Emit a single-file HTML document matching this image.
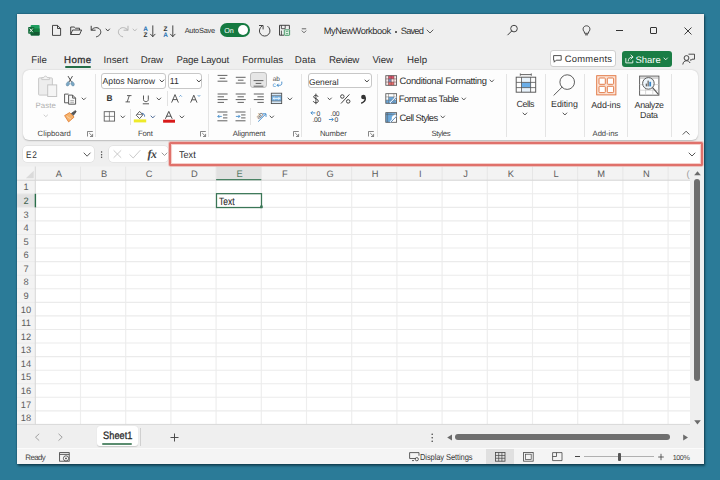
<!DOCTYPE html><html><head><meta charset="utf-8"><style>
*{box-sizing:border-box;margin:0;padding:0}
html,body{width:720px;height:480px;overflow:hidden;background:#2b7b98;font-family:"Liberation Sans",sans-serif;color:#242424;text-rendering:geometricPrecision}
.a{position:absolute}
#win{position:absolute;left:17px;top:13.7px;width:687px;height:450.3px;background:#efefef;box-shadow:0 0 1.5px rgba(0,25,35,.6),0.5px 1.5px 2px rgba(0,25,35,.5)}
.t{position:absolute;white-space:nowrap;line-height:1}
svg{position:absolute;overflow:visible}
</style></head><body>
<div id="win"></div>
<svg class="a" style="left:0;top:0" width="720" height="480" viewBox="0 0 720 480"><rect x="35.3" y="180.2" width="654.7" height="244.5" fill="#ffffff"/><rect x="17" y="166.5" width="673.0" height="13.699999999999989" fill="#f3f3f3"/><rect x="17" y="180.2" width="18.299999999999997" height="244.5" fill="#f3f3f3"/><rect x="216.10000000000002" y="166.5" width="45.2" height="13.699999999999989" fill="#e1e1e1"/><rect x="17" y="193.76999999999998" width="18.299999999999997" height="13.57" fill="#e1e1e1"/><line x1="80.5" y1="166.5" x2="80.5" y2="180.2" stroke="#e6e6e6" stroke-width="1"/><line x1="80.5" y1="180.2" x2="80.5" y2="424.7" stroke="#eeeeee" stroke-width="1.2"/><line x1="125.7" y1="166.5" x2="125.7" y2="180.2" stroke="#e6e6e6" stroke-width="1"/><line x1="125.7" y1="180.2" x2="125.7" y2="424.7" stroke="#eeeeee" stroke-width="1.2"/><line x1="170.90000000000003" y1="166.5" x2="170.90000000000003" y2="180.2" stroke="#e6e6e6" stroke-width="1"/><line x1="170.90000000000003" y1="180.2" x2="170.90000000000003" y2="424.7" stroke="#eeeeee" stroke-width="1.2"/><line x1="216.10000000000002" y1="166.5" x2="216.10000000000002" y2="180.2" stroke="#e6e6e6" stroke-width="1"/><line x1="216.10000000000002" y1="180.2" x2="216.10000000000002" y2="424.7" stroke="#eeeeee" stroke-width="1.2"/><line x1="261.3" y1="166.5" x2="261.3" y2="180.2" stroke="#e6e6e6" stroke-width="1"/><line x1="261.3" y1="180.2" x2="261.3" y2="424.7" stroke="#eeeeee" stroke-width="1.2"/><line x1="306.50000000000006" y1="166.5" x2="306.50000000000006" y2="180.2" stroke="#e6e6e6" stroke-width="1"/><line x1="306.50000000000006" y1="180.2" x2="306.50000000000006" y2="424.7" stroke="#eeeeee" stroke-width="1.2"/><line x1="351.70000000000005" y1="166.5" x2="351.70000000000005" y2="180.2" stroke="#e6e6e6" stroke-width="1"/><line x1="351.70000000000005" y1="180.2" x2="351.70000000000005" y2="424.7" stroke="#eeeeee" stroke-width="1.2"/><line x1="396.90000000000003" y1="166.5" x2="396.90000000000003" y2="180.2" stroke="#e6e6e6" stroke-width="1"/><line x1="396.90000000000003" y1="180.2" x2="396.90000000000003" y2="424.7" stroke="#eeeeee" stroke-width="1.2"/><line x1="442.1" y1="166.5" x2="442.1" y2="180.2" stroke="#e6e6e6" stroke-width="1"/><line x1="442.1" y1="180.2" x2="442.1" y2="424.7" stroke="#eeeeee" stroke-width="1.2"/><line x1="487.3" y1="166.5" x2="487.3" y2="180.2" stroke="#e6e6e6" stroke-width="1"/><line x1="487.3" y1="180.2" x2="487.3" y2="424.7" stroke="#eeeeee" stroke-width="1.2"/><line x1="532.5" y1="166.5" x2="532.5" y2="180.2" stroke="#e6e6e6" stroke-width="1"/><line x1="532.5" y1="180.2" x2="532.5" y2="424.7" stroke="#eeeeee" stroke-width="1.2"/><line x1="577.7" y1="166.5" x2="577.7" y2="180.2" stroke="#e6e6e6" stroke-width="1"/><line x1="577.7" y1="180.2" x2="577.7" y2="424.7" stroke="#eeeeee" stroke-width="1.2"/><line x1="622.9" y1="166.5" x2="622.9" y2="180.2" stroke="#e6e6e6" stroke-width="1"/><line x1="622.9" y1="180.2" x2="622.9" y2="424.7" stroke="#eeeeee" stroke-width="1.2"/><line x1="668.1" y1="166.5" x2="668.1" y2="180.2" stroke="#e6e6e6" stroke-width="1"/><line x1="668.1" y1="180.2" x2="668.1" y2="424.7" stroke="#eeeeee" stroke-width="1.2"/><line x1="35.3" y1="193.76999999999998" x2="690.0" y2="193.76999999999998" stroke="#ebebeb" stroke-width="1.1"/><line x1="17" y1="193.76999999999998" x2="35.3" y2="193.76999999999998" stroke="#ebebeb" stroke-width="1"/><line x1="35.3" y1="207.33999999999997" x2="690.0" y2="207.33999999999997" stroke="#ebebeb" stroke-width="1.1"/><line x1="17" y1="207.33999999999997" x2="35.3" y2="207.33999999999997" stroke="#ebebeb" stroke-width="1"/><line x1="35.3" y1="220.91" x2="690.0" y2="220.91" stroke="#ebebeb" stroke-width="1.1"/><line x1="17" y1="220.91" x2="35.3" y2="220.91" stroke="#ebebeb" stroke-width="1"/><line x1="35.3" y1="234.48" x2="690.0" y2="234.48" stroke="#ebebeb" stroke-width="1.1"/><line x1="17" y1="234.48" x2="35.3" y2="234.48" stroke="#ebebeb" stroke-width="1"/><line x1="35.3" y1="248.04999999999998" x2="690.0" y2="248.04999999999998" stroke="#ebebeb" stroke-width="1.1"/><line x1="17" y1="248.04999999999998" x2="35.3" y2="248.04999999999998" stroke="#ebebeb" stroke-width="1"/><line x1="35.3" y1="261.62" x2="690.0" y2="261.62" stroke="#ebebeb" stroke-width="1.1"/><line x1="17" y1="261.62" x2="35.3" y2="261.62" stroke="#ebebeb" stroke-width="1"/><line x1="35.3" y1="275.19" x2="690.0" y2="275.19" stroke="#ebebeb" stroke-width="1.1"/><line x1="17" y1="275.19" x2="35.3" y2="275.19" stroke="#ebebeb" stroke-width="1"/><line x1="35.3" y1="288.76" x2="690.0" y2="288.76" stroke="#ebebeb" stroke-width="1.1"/><line x1="17" y1="288.76" x2="35.3" y2="288.76" stroke="#ebebeb" stroke-width="1"/><line x1="35.3" y1="302.33" x2="690.0" y2="302.33" stroke="#ebebeb" stroke-width="1.1"/><line x1="17" y1="302.33" x2="35.3" y2="302.33" stroke="#ebebeb" stroke-width="1"/><line x1="35.3" y1="315.9" x2="690.0" y2="315.9" stroke="#ebebeb" stroke-width="1.1"/><line x1="17" y1="315.9" x2="35.3" y2="315.9" stroke="#ebebeb" stroke-width="1"/><line x1="35.3" y1="329.47" x2="690.0" y2="329.47" stroke="#ebebeb" stroke-width="1.1"/><line x1="17" y1="329.47" x2="35.3" y2="329.47" stroke="#ebebeb" stroke-width="1"/><line x1="35.3" y1="343.03999999999996" x2="690.0" y2="343.03999999999996" stroke="#ebebeb" stroke-width="1.1"/><line x1="17" y1="343.03999999999996" x2="35.3" y2="343.03999999999996" stroke="#ebebeb" stroke-width="1"/><line x1="35.3" y1="356.61" x2="690.0" y2="356.61" stroke="#ebebeb" stroke-width="1.1"/><line x1="17" y1="356.61" x2="35.3" y2="356.61" stroke="#ebebeb" stroke-width="1"/><line x1="35.3" y1="370.18" x2="690.0" y2="370.18" stroke="#ebebeb" stroke-width="1.1"/><line x1="17" y1="370.18" x2="35.3" y2="370.18" stroke="#ebebeb" stroke-width="1"/><line x1="35.3" y1="383.75" x2="690.0" y2="383.75" stroke="#ebebeb" stroke-width="1.1"/><line x1="17" y1="383.75" x2="35.3" y2="383.75" stroke="#ebebeb" stroke-width="1"/><line x1="35.3" y1="397.32" x2="690.0" y2="397.32" stroke="#ebebeb" stroke-width="1.1"/><line x1="17" y1="397.32" x2="35.3" y2="397.32" stroke="#ebebeb" stroke-width="1"/><line x1="35.3" y1="410.89" x2="690.0" y2="410.89" stroke="#ebebeb" stroke-width="1.1"/><line x1="17" y1="410.89" x2="35.3" y2="410.89" stroke="#ebebeb" stroke-width="1"/><line x1="35.3" y1="424.46" x2="690.0" y2="424.46" stroke="#ebebeb" stroke-width="1.1"/><line x1="17" y1="424.46" x2="35.3" y2="424.46" stroke="#ebebeb" stroke-width="1"/><line x1="17" y1="424.4" x2="690.0" y2="424.4" stroke="#d9d9d9" stroke-width="1"/><line x1="17" y1="180.2" x2="690.0" y2="180.2" stroke="#d4d4d4" stroke-width="1"/><line x1="35.3" y1="166.5" x2="35.3" y2="424.7" stroke="#d8d8d8" stroke-width="1"/><line x1="216.10000000000002" y1="179.6" x2="261.3" y2="179.6" stroke="#4a8264" stroke-width="1.4"/><line x1="35.4" y1="193.76999999999998" x2="35.4" y2="207.33999999999997" stroke="#2a6e4a" stroke-width="1.4"/><polygon points="33.7,170.7 33.7,178.2 25.8,178.2" fill="#dadada"/><rect x="216.50000000000003" y="193.67" width="45.0" height="13.870000000000001" fill="none" stroke="#3a7656" stroke-width="1.25"/><rect x="260.1" y="205.53999999999996" width="2.6" height="2.6" fill="#3a7656"/></svg>
<div class="t" style="left:43.8px;width:30px;text-align:center;top:169.5px;font-size:9.3px;color:#5e5e5e">A</div>
<div class="t" style="left:89.0px;width:30px;text-align:center;top:169.5px;font-size:9.3px;color:#5e5e5e">B</div>
<div class="t" style="left:134.2px;width:30px;text-align:center;top:169.5px;font-size:9.3px;color:#5e5e5e">C</div>
<div class="t" style="left:179.4px;width:30px;text-align:center;top:169.5px;font-size:9.3px;color:#5e5e5e">D</div>
<div class="t" style="left:224.6px;width:30px;text-align:center;top:169.5px;font-size:9.3px;color:#557a66">E</div>
<div class="t" style="left:269.8px;width:30px;text-align:center;top:169.5px;font-size:9.3px;color:#5e5e5e">F</div>
<div class="t" style="left:315.0px;width:30px;text-align:center;top:169.5px;font-size:9.3px;color:#5e5e5e">G</div>
<div class="t" style="left:360.2px;width:30px;text-align:center;top:169.5px;font-size:9.3px;color:#5e5e5e">H</div>
<div class="t" style="left:405.4px;width:30px;text-align:center;top:169.5px;font-size:9.3px;color:#5e5e5e">I</div>
<div class="t" style="left:450.6px;width:30px;text-align:center;top:169.5px;font-size:9.3px;color:#5e5e5e">J</div>
<div class="t" style="left:495.8px;width:30px;text-align:center;top:169.5px;font-size:9.3px;color:#5e5e5e">K</div>
<div class="t" style="left:541.0px;width:30px;text-align:center;top:169.5px;font-size:9.3px;color:#5e5e5e">L</div>
<div class="t" style="left:586.2px;width:30px;text-align:center;top:169.5px;font-size:9.3px;color:#5e5e5e">M</div>
<div class="t" style="left:631.4px;width:30px;text-align:center;top:169.5px;font-size:9.3px;color:#5e5e5e">N</div>
<div class="t" style="left:686.6px;top:169.5px;font-size:9.3px;color:#9a9a9a">(</div>
<div class="t" style="left:17px;width:18px;text-align:center;top:183.4px;font-size:9.3px;color:#5e5e5e">1</div>
<div class="t" style="left:17px;width:18px;text-align:center;top:197.0px;font-size:9.3px;color:#3f5f4e">2</div>
<div class="t" style="left:17px;width:18px;text-align:center;top:210.6px;font-size:9.3px;color:#5e5e5e">3</div>
<div class="t" style="left:17px;width:18px;text-align:center;top:224.1px;font-size:9.3px;color:#5e5e5e">4</div>
<div class="t" style="left:17px;width:18px;text-align:center;top:237.7px;font-size:9.3px;color:#5e5e5e">5</div>
<div class="t" style="left:17px;width:18px;text-align:center;top:251.3px;font-size:9.3px;color:#5e5e5e">6</div>
<div class="t" style="left:17px;width:18px;text-align:center;top:264.9px;font-size:9.3px;color:#5e5e5e">7</div>
<div class="t" style="left:17px;width:18px;text-align:center;top:278.4px;font-size:9.3px;color:#5e5e5e">8</div>
<div class="t" style="left:17px;width:18px;text-align:center;top:292.0px;font-size:9.3px;color:#5e5e5e">9</div>
<div class="t" style="left:17px;width:18px;text-align:center;top:305.6px;font-size:9.3px;color:#5e5e5e">10</div>
<div class="t" style="left:17px;width:18px;text-align:center;top:319.1px;font-size:9.3px;color:#5e5e5e">11</div>
<div class="t" style="left:17px;width:18px;text-align:center;top:332.7px;font-size:9.3px;color:#5e5e5e">12</div>
<div class="t" style="left:17px;width:18px;text-align:center;top:346.3px;font-size:9.3px;color:#5e5e5e">13</div>
<div class="t" style="left:17px;width:18px;text-align:center;top:359.8px;font-size:9.3px;color:#5e5e5e">14</div>
<div class="t" style="left:17px;width:18px;text-align:center;top:373.4px;font-size:9.3px;color:#5e5e5e">15</div>
<div class="t" style="left:17px;width:18px;text-align:center;top:387.0px;font-size:9.3px;color:#5e5e5e">16</div>
<div class="t" style="left:17px;width:18px;text-align:center;top:400.6px;font-size:9.3px;color:#5e5e5e">17</div>
<div class="t" style="left:17px;width:18px;text-align:center;top:414.1px;font-size:9.3px;color:#5e5e5e">18</div>
<svg style="left:0;top:0" width="720" height="480" viewBox="0 0 720 480"><rect x="30.6" y="25.0" width="9.0" height="10.6" rx="1.0" fill="#1f9d5f"/><rect x="30.6" y="28.5" width="9.0" height="3.6" fill="#13803f"/><path d="M30.6,32.1 H39.6 V34.6 C39.6,35.2 39.2,35.6 38.6,35.6 H31.6 C31.0,35.6 30.6,35.2 30.6,34.6 Z" fill="#135a33"/><rect x="28.2" y="26.9" width="6.0" height="6.8" rx="0.7" fill="#0f6b37"/><path d="M29.7,28.5 L32.8,32.2 M32.8,28.5 L29.7,32.2" stroke="#e8f5ee" stroke-width="1.0"/></svg>
<svg style="left:0;top:0" width="720" height="480" viewBox="0 0 720 480"><path d="M52.5,25.4 H57.5 L60.6,28.5 V35.4 H52.5 Z M57.5,25.4 V28.5 H60.6" fill="none" stroke="#333" stroke-width="0.9" stroke-linejoin="round"/></svg>
<svg style="left:69.50px;top:25.50px" width="12.50" height="9.50" viewBox="0 0 12.50 9.50"><path d="M0.7,8.5 V1 H4.2 L5.4,2.2 H9.5 V4 M0.7,8.5 L2.6,4 H11.6 L9.6,8.5 Z" fill="none" stroke="#333" stroke-width="0.9" stroke-linejoin="round"/></svg>
<svg style="left:90.00px;top:24.50px" width="12.00" height="12.50" viewBox="0 0 12.00 12.50"><path d="M1.2,1.2 V5.2 H5.2 M1.5,5 C3.5,2 8,1.8 10,4.5 C11.8,7.2 10.5,10.8 6.5,11.8" fill="none" stroke="#333" stroke-width="0.95" stroke-linecap="round" stroke-linejoin="round"/></svg>
<svg style="left:105.20px;top:28.30px" width="5.60" height="4.00" viewBox="0 0 5.60 4.00"><polyline points="1,1 2.8,3 4.6,1" fill="none" stroke="#333" stroke-width="0.9" stroke-linecap="round" stroke-linejoin="round"/></svg>
<svg style="left:117.00px;top:24.50px" width="12.50" height="12.50" viewBox="0 0 12.50 12.50"><path d="M11,1.2 V5.2 H7 M10.7,5 C8.7,2 4.2,1.8 2.2,4.5 C0.4,7.2 1.7,10.8 5.7,11.8" fill="none" stroke="#b0b0b0" stroke-width="0.95" stroke-linecap="round" stroke-linejoin="round"/></svg>
<svg style="left:132.40px;top:28.30px" width="5.60" height="4.00" viewBox="0 0 5.60 4.00"><polyline points="1,1 2.8,3 4.6,1" fill="none" stroke="#b8b8b8" stroke-width="0.9" stroke-linecap="round" stroke-linejoin="round"/></svg>
<svg style="left:143.00px;top:24.50px" width="13.00" height="12.50" viewBox="0 0 13.00 12.50"><text x="0.3" y="5.6" font-size="6.4" font-family="Liberation Sans" font-weight="bold" fill="#2e75b6">A</text><text x="0.5" y="11.8" font-size="6.4" font-family="Liberation Sans" font-weight="bold" fill="#333">Z</text><path d="M9.8,0.8 V11.5 M7.5,9.2 L9.8,11.6 L12.1,9.2" fill="none" stroke="#333" stroke-width="0.9" stroke-linecap="round"/></svg>
<svg style="left:163.00px;top:24.50px" width="13.00" height="12.50" viewBox="0 0 13.00 12.50"><text x="0.5" y="5.6" font-size="6.4" font-family="Liberation Sans" font-weight="bold" fill="#333">Z</text><text x="0.3" y="11.8" font-size="6.4" font-family="Liberation Sans" font-weight="bold" fill="#2e75b6">A</text><path d="M9.8,0.8 V11.5 M7.5,9.2 L9.8,11.6 L12.1,9.2" fill="none" stroke="#333" stroke-width="0.9" stroke-linecap="round"/></svg>
<div class="t" id="t0" style="left:184.66px;top:27.43px;font-size:7.4px;color:#333;font-weight:400;letter-spacing:-0.229px;">AutoSave</div>
<div class="a" style="left:219.7px;top:23.4px;width:30.40px;height:13.60px;background:#157a41;border-radius:7px"></div>
<div class="t" id="t1" style="left:224.18px;top:27.06px;font-size:7.2px;color:#fff;font-weight:400;letter-spacing:0.020px;">On</div>
<div class="a" style="left:237.8px;top:25.2px;width:10.10px;height:10.10px;background:#fff;border-radius:50%"></div>
<svg style="left:0;top:0" width="720" height="480" viewBox="0 0 720 480"><path d="M267.77,26.32 A5.35,5.35 0 1 1 261.71,26.26" fill="none" stroke="#3a3a3a" stroke-width="0.95" stroke-linecap="round"/><path d="M259.4,25.5 H263.1 V29.0" fill="none" stroke="#3a3a3a" stroke-width="0.95" stroke-linecap="round" stroke-linejoin="round"/></svg>
<svg style="left:0;top:0" width="720" height="480" viewBox="0 0 720 480"><path d="M284.0,35.2 H279.5 V25.3 H289.4 V29.4" fill="none" stroke="#3a3a3a" stroke-width="0.95" stroke-linejoin="round"/><path d="M281.4,25.3 V28.7 H285.2 V25.3" fill="none" stroke="#3a3a3a" stroke-width="0.85"/><path d="M281.4,30.6 V35.2" stroke="#3a3a3a" stroke-width="0.85"/><rect x="284.3" y="29.8" width="5.3" height="5.5" rx="0.5" fill="#e6f4ea" stroke="#2d8a52" stroke-width="0.85"/><path d="M285.6,32.2 C285.9,31.0 288.0,30.8 288.4,31.9 M288.5,32.9 C288.1,34.1 286.0,34.0 285.6,33.0" fill="none" stroke="#2d8a52" stroke-width="0.7"/></svg>
<svg style="left:301.00px;top:28.00px" width="6.00" height="6.00" viewBox="0 0 6.00 6.00"><path d="M0.8,0.8 H5.2" stroke="#444" stroke-width="0.8"/><path d="M0.8,2.6 L3,4.8 L5.2,2.6" fill="none" stroke="#444" stroke-width="0.8"/></svg>
<div class="t" id="t2" style="left:323.66px;top:27.45px;font-size:9.3px;color:#303030;font-weight:400;letter-spacing:-0.427px;">MyNewWorkbook</div>
<div class="a" style="left:394.8px;top:30.5px;width:2.20px;height:2.20px;background:#333;border-radius:50%"></div>
<div class="t" id="t3" style="left:400.74px;top:27.45px;font-size:9.3px;color:#303030;font-weight:400;letter-spacing:-0.800px;">Saved</div>
<svg style="left:426.00px;top:28.80px" width="8.00" height="5.00" viewBox="0 0 8.00 5.00"><polyline points="1,1 4.0,4.0 7.0,1" fill="none" stroke="#444" stroke-width="0.85" stroke-linecap="round" stroke-linejoin="round"/></svg>
<svg style="left:0;top:0" width="720" height="480" viewBox="0 0 720 480"><circle cx="514.0" cy="28.6" r="3.3" fill="none" stroke="#3a3a3a" stroke-width="0.95"/><path d="M511.7,31.0 L507.8,34.9" stroke="#3a3a3a" stroke-width="1.0" stroke-linecap="round"/></svg>
<svg style="left:581.50px;top:25.00px" width="9.00" height="11.00" viewBox="0 0 9.00 11.00"><path d="M2.3,6.8 C0.2,5 0.8,0.9 4.5,0.8 C8.2,0.9 8.8,5 6.7,6.8 L6.4,8.3 H2.6 Z M3,9.8 H6" fill="none" stroke="#333" stroke-width="0.9" stroke-linejoin="round"/></svg>
<div class="a" style="left:616.3px;top:29.8px;width:6.70px;height:0.90px;background:#333"></div>
<div class="a" style="left:650px;top:26.9px;width:7.00px;height:7.10px;border:0.9px solid #333;border-radius:1px"></div>
<svg style="left:683.50px;top:26.50px" width="8.00" height="8.00" viewBox="0 0 8.00 8.00"><path d="M0.8,0.8 L7.2,7.2 M7.2,0.8 L0.8,7.2" stroke="#333" stroke-width="0.95" stroke-linecap="round"/></svg>
<div class="t" id="t4" style="left:31.28px;top:56.03px;font-size:9.7px;color:#303030;font-weight:400;letter-spacing:0.000px;">File</div>
<div class="t" id="t5" style="left:63.96px;top:56.03px;font-size:9.7px;color:#303030;font-weight:400;letter-spacing:0.427px;-webkit-text-stroke:0.3px #303030;">Home</div>
<div class="t" id="t6" style="left:103.40px;top:56.03px;font-size:9.7px;color:#303030;font-weight:400;letter-spacing:0.096px;">Insert</div>
<div class="t" id="t7" style="left:140.84px;top:56.03px;font-size:9.7px;color:#303030;font-weight:400;letter-spacing:-0.160px;">Draw</div>
<div class="t" id="t8" style="left:176.40px;top:56.03px;font-size:9.7px;color:#303030;font-weight:400;letter-spacing:-0.160px;">Page Layout</div>
<div class="t" id="t9" style="left:242.34px;top:56.03px;font-size:9.7px;color:#303030;font-weight:400;letter-spacing:0.069px;">Formulas</div>
<div class="t" id="t10" style="left:294.84px;top:56.03px;font-size:9.7px;color:#303030;font-weight:400;letter-spacing:0.107px;">Data</div>
<div class="t" id="t11" style="left:329.00px;top:56.03px;font-size:9.7px;color:#303030;font-weight:400;letter-spacing:-0.288px;">Review</div>
<div class="t" id="t12" style="left:372.40px;top:56.03px;font-size:9.7px;color:#303030;font-weight:400;letter-spacing:-0.053px;">View</div>
<div class="t" id="t13" style="left:407.02px;top:56.03px;font-size:9.7px;color:#303030;font-weight:400;letter-spacing:0.053px;">Help</div>
<div class="a" style="left:64.6px;top:66.4px;width:26.30px;height:1.60px;background:#256e48;border-radius:1px"></div>
<div class="a" style="left:550.2px;top:50.3px;width:65.40px;height:16.80px;background:#fff;border:1px solid #cfcfcf;border-radius:3px"></div>
<svg style="left:553.30px;top:54.50px" width="9.20" height="8.00" viewBox="0 0 9.20 8.00"><path d="M0.6,0.6 H8.2 V5.2 H3.2 L1.2,7.2 V5.2 H0.6 Z" fill="none" stroke="#333" stroke-width="0.85" stroke-linejoin="round"/></svg>
<div class="t" id="t14" style="left:564.70px;top:54.07px;font-size:9.4px;color:#303030;font-weight:400;letter-spacing:0.286px;">Comments</div>
<div class="a" style="left:621.9px;top:50.5px;width:50.00px;height:16.00px;background:#1a7d45;border-radius:3px"></div>
<svg style="left:624.50px;top:53.50px" width="9.50" height="10.00" viewBox="0 0 9.50 10.00"><path d="M0.8,4.5 V8.9 H7.8 V6.8 M3.2,7 C3.4,4.2 5,3 7.5,3 M5.9,1 L8.1,3 L5.9,5" fill="none" stroke="#fff" stroke-width="0.85" stroke-linecap="round" stroke-linejoin="round"/></svg>
<div class="t" id="t15" style="left:635.60px;top:54.67px;font-size:9.4px;color:#fff;font-weight:400;letter-spacing:0.000px;">Share</div>
<svg style="left:662.80px;top:57.00px" width="5.40" height="3.80" viewBox="0 0 5.40 3.80"><polyline points="1,1 2.7,2.8 4.4,1" fill="none" stroke="#fff" stroke-width="0.85" stroke-linecap="round" stroke-linejoin="round"/></svg>
<svg style="left:681.50px;top:53.00px" width="13.50" height="12.00" viewBox="0 0 13.50 12.00"><circle cx="4.5" cy="5" r="2.4" fill="none" stroke="#333" stroke-width="0.9"/><path d="M0.8,11.5 C1.2,8.8 2.5,7.8 4.5,7.8 C6.5,7.8 7.5,8.5 8,10" fill="none" stroke="#333" stroke-width="0.9"/><path d="M6.5,1.2 H12.5 V6.2 H10 L8.8,7.5 V6.2" fill="none" stroke="#333" stroke-width="0.85" stroke-linejoin="round"/></svg>
<div class="a" style="left:22.8px;top:70px;width:674.90px;height:70.00px;background:#fdfdfd;border-radius:6px;box-shadow:0 0.5px 1.5px rgba(0,0,0,.22)"></div>
<div class="a" style="left:95.1px;top:73.5px;width:0.80px;height:63.50px;background:#e4e4e4"></div>
<div class="a" style="left:207.8px;top:73.5px;width:0.80px;height:63.50px;background:#e4e4e4"></div>
<div class="a" style="left:301.0px;top:73.5px;width:0.80px;height:63.50px;background:#e4e4e4"></div>
<div class="a" style="left:377.1px;top:73.5px;width:0.80px;height:63.50px;background:#e4e4e4"></div>
<div class="a" style="left:505.9px;top:73.5px;width:0.80px;height:63.50px;background:#e4e4e4"></div>
<div class="a" style="left:545.2px;top:73.5px;width:0.80px;height:63.50px;background:#e4e4e4"></div>
<div class="a" style="left:584.0px;top:73.5px;width:0.80px;height:63.50px;background:#e4e4e4"></div>
<div class="a" style="left:627.2px;top:73.5px;width:0.80px;height:63.50px;background:#e4e4e4"></div>
<div class="a" style="left:671.3px;top:73.5px;width:0.80px;height:63.50px;background:#e4e4e4"></div>
<div class="t" id="t16" style="left:37.60px;top:129.86px;font-size:7.7px;color:#444;font-weight:400;letter-spacing:0.040px;">Clipboard</div>
<div class="t" id="t17" style="left:137.98px;top:129.86px;font-size:7.7px;color:#444;font-weight:400;letter-spacing:-0.160px;">Font</div>
<div class="t" id="t18" style="left:232.72px;top:129.86px;font-size:7.7px;color:#444;font-weight:400;letter-spacing:-0.180px;">Alignment</div>
<div class="t" id="t19" style="left:319.92px;top:129.86px;font-size:7.7px;color:#444;font-weight:400;letter-spacing:-0.096px;">Number</div>
<div class="t" id="t20" style="left:431.48px;top:129.86px;font-size:7.7px;color:#444;font-weight:400;letter-spacing:-0.384px;">Styles</div>
<div class="t" id="t21" style="left:592.60px;top:129.86px;font-size:7.7px;color:#444;font-weight:400;letter-spacing:-0.080px;">Add-ins</div>
<svg style="left:86.90px;top:130.60px" width="6.50" height="6.00" viewBox="0 0 6.50 6.00"><path d="M0.5,5.5 V0.5 H5.8" fill="none" stroke="#555" stroke-width="0.7"/><path d="M2.2,2 L5.6,5.4 M3,5.5 H5.6 V2.9" fill="none" stroke="#555" stroke-width="0.7"/></svg>
<svg style="left:199.70px;top:130.60px" width="6.50" height="6.00" viewBox="0 0 6.50 6.00"><path d="M0.5,5.5 V0.5 H5.8" fill="none" stroke="#555" stroke-width="0.7"/><path d="M2.2,2 L5.6,5.4 M3,5.5 H5.6 V2.9" fill="none" stroke="#555" stroke-width="0.7"/></svg>
<svg style="left:293.30px;top:130.60px" width="6.50" height="6.00" viewBox="0 0 6.50 6.00"><path d="M0.5,5.5 V0.5 H5.8" fill="none" stroke="#555" stroke-width="0.7"/><path d="M2.2,2 L5.6,5.4 M3,5.5 H5.6 V2.9" fill="none" stroke="#555" stroke-width="0.7"/></svg>
<svg style="left:368.40px;top:130.60px" width="6.50" height="6.00" viewBox="0 0 6.50 6.00"><path d="M0.5,5.5 V0.5 H5.8" fill="none" stroke="#555" stroke-width="0.7"/><path d="M2.2,2 L5.6,5.4 M3,5.5 H5.6 V2.9" fill="none" stroke="#555" stroke-width="0.7"/></svg>
<svg style="left:0;top:0" width="720" height="480" viewBox="0 0 720 480"><rect x="38.6" y="77.9" width="13.8" height="17.2" rx="0.8" fill="#ededed" stroke="#c6c6c6" stroke-width="0.95"/><path d="M41.8,79.6 V77.6 H43.8 C44.2,75.6 46.8,75.6 47.2,77.6 H49.4 V79.6 Z" fill="#f4f4f4" stroke="#c6c6c6" stroke-width="0.9" stroke-linejoin="round"/><rect x="47.7" y="84.9" width="9.0" height="11.6" fill="#f5f5f5" stroke="#c2c2c2" stroke-width="0.95"/><path d="M68.2,76.4 L71.6,82.2 M72.3,76.4 L68.9,82.2" stroke="#4a4a4a" stroke-width="0.95" stroke-linecap="round"/><path d="M68.4,81.4 C66.4,82.4 65.6,84.6 66.6,85.7 C67.8,86.6 69.6,85.2 69.7,83.2 Z" fill="#7ba7c4" stroke="#5d86a3" stroke-width="0.5"/><path d="M72.1,81.4 C74.1,82.4 74.9,84.6 73.9,85.7 C72.7,86.6 70.9,85.2 70.8,83.2 Z" fill="#7ba7c4" stroke="#5d86a3" stroke-width="0.5"/><path d="M68.2,102.8 H64.6 V94.1 H68.6" fill="none" stroke="#4a4a4a" stroke-width="0.9" stroke-linejoin="round"/><path d="M68.6,95.1 H72.6 L75.6,98.1 V104.2 H68.6 Z M72.6,95.1 V98.1 H75.6" fill="#f7f7f7" stroke="#4a4a4a" stroke-width="0.9" stroke-linejoin="round"/><path d="M70.3,100.6 H73.9 M70.3,102.3 H73.9" stroke="#777" stroke-width="0.6"/><path d="M71.2,113.6 L74.9,110.9 C75.7,110.4 76.5,111.4 75.9,112.0 L73.2,115.6" fill="#555" stroke="#4a4a4a" stroke-width="0.8" stroke-linejoin="round"/><path d="M69.6,112.6 L74.1,117.1 L68.6,121.9 L64.6,115.6 Z" fill="#f6b26b" stroke="#de7a2e" stroke-width="0.8" stroke-linejoin="round"/><path d="M66.8,116.3 L71.0,119.0" stroke="#fbd7ad" stroke-width="0.8"/></svg>
<div class="t" id="t22" style="left:35.56px;top:101.88px;font-size:7.8px;color:#b0b0b0;font-weight:400;letter-spacing:0.080px;">Paste</div>
<svg style="left:42.60px;top:113.75px" width="5.60" height="3.70" viewBox="0 0 5.60 3.70"><polyline points="1,1 2.8,2.7 4.6,1" fill="none" stroke="#c0c0c0" stroke-width="0.8" stroke-linecap="round" stroke-linejoin="round"/></svg>
<svg style="left:80.60px;top:96.90px" width="5.60" height="3.80" viewBox="0 0 5.60 3.80"><polyline points="1,1 2.8,2.8 4.6,1" fill="none" stroke="#444" stroke-width="0.9" stroke-linecap="round" stroke-linejoin="round"/></svg>
<div class="a" style="left:101.3px;top:72.7px;width:65.00px;height:16.10px;background:#fff;border:1px solid #c8c8c8;border-radius:3px"></div>
<div class="t" id="t23" style="left:102.60px;top:77.36px;font-size:8.7px;color:#303030;font-weight:400;letter-spacing:-0.029px;">Aptos Narrow</div>
<svg style="left:159.20px;top:78.90px" width="5.80" height="4.00" viewBox="0 0 5.80 4.00"><polyline points="1,1 2.9,3 4.8,1" fill="none" stroke="#333" stroke-width="0.9" stroke-linecap="round" stroke-linejoin="round"/></svg>
<div class="a" style="left:168.3px;top:72.7px;width:34.20px;height:16.10px;background:#fff;border:1px solid #c8c8c8;border-radius:3px"></div>
<div class="t" id="t24" style="left:169.80px;top:76.96px;font-size:8.7px;color:#303030;font-weight:400;letter-spacing:0.000px;">11</div>
<svg style="left:195.90px;top:78.90px" width="5.80" height="4.00" viewBox="0 0 5.80 4.00"><polyline points="1,1 2.9,3 4.8,1" fill="none" stroke="#333" stroke-width="0.9" stroke-linecap="round" stroke-linejoin="round"/></svg>
<div class="t" id="t25" style="left:106.50px;top:94.10px;font-size:8.4px;color:#333;font-weight:700;letter-spacing:0.000px;">B</div>
<svg style="left:124.50px;top:94.50px" width="7.00" height="7.50" viewBox="0 0 7.00 7.50"><path d="M2,0.6 H6.5 M0.5,6.9 H5 M4.3,0.6 L2.2,6.9" fill="none" stroke="#444" stroke-width="0.85"/></svg>
<svg style="left:141.50px;top:94.50px" width="8.00" height="9.50" viewBox="0 0 8.00 9.50"><path d="M1.5,0.5 V4.6 C1.5,7.3 6.3,7.3 6.3,4.6 V0.5" fill="none" stroke="#444" stroke-width="0.9"/><path d="M0.8,8.8 H7" stroke="#444" stroke-width="0.9"/></svg>
<svg style="left:156.00px;top:96.90px" width="5.80" height="4.00" viewBox="0 0 5.80 4.00"><polyline points="1,1 2.9,3 4.8,1" fill="none" stroke="#444" stroke-width="0.9" stroke-linecap="round" stroke-linejoin="round"/></svg>
<div class="a" style="left:166.5px;top:91.3px;width:0.80px;height:15.00px;background:#e2e2e2"></div>
<svg style="left:170.50px;top:93.50px" width="11.50" height="9.50" viewBox="0 0 11.50 9.50"><path d="M0.6,8.6 L4,0.6 L7.4,8.6 M1.8,5.6 H6.2" fill="none" stroke="#444" stroke-width="0.9"/><path d="M8.4,2.6 L9.6,1.4 L10.8,2.6" fill="none" stroke="#3a86c8" stroke-width="0.8"/></svg>
<svg style="left:189.50px;top:93.50px" width="11.50" height="9.50" viewBox="0 0 11.50 9.50"><path d="M0.6,8.6 L3.8,1.2 L7,8.6 M1.8,5.8 H5.8" fill="none" stroke="#444" stroke-width="0.9"/><path d="M7.8,1.2 L9,2.4 L10.2,1.2" fill="none" stroke="#3a86c8" stroke-width="0.8"/></svg>
<svg style="left:0;top:0" width="720" height="480" viewBox="0 0 720 480"><rect x="104.2" y="111.7" width="10.4" height="9.4" fill="none" stroke="#555" stroke-width="0.85"/><path d="M109.4,111.7 V121.1 M104.2,116.4 H114.6" stroke="#6a6a6a" stroke-width="0.75"/></svg>
<svg style="left:120.10px;top:114.65px" width="5.60" height="3.90" viewBox="0 0 5.60 3.90"><polyline points="1,1 2.8,2.9 4.6,1" fill="none" stroke="#444" stroke-width="0.9" stroke-linecap="round" stroke-linejoin="round"/></svg>
<div class="a" style="left:130.0px;top:108.6px;width:0.70px;height:16.10px;background:#e2e2e2"></div>
<svg style="left:0;top:0" width="720" height="480" viewBox="0 0 720 480"><path d="M139.6,111.4 L142.9,114.8 L139.6,118.6 L136.2,115.2 Z" fill="#fff" stroke="#444" stroke-width="0.85" stroke-linejoin="round"/><path d="M137.0,114.4 L142.2,114.6" stroke="#444" stroke-width="0.6"/><path d="M141.8,113.2 C143.6,113.4 144.8,114.6 144.6,116.6" fill="none" stroke="#3a6fb0" stroke-width="0.95"/><rect x="133.8" y="119.4" width="12.4" height="3.0" fill="#eeea2a"/><path d="M165.4,118.8 L168.8,111.4 L172.2,118.8 M166.6,116.2 H171.0" fill="none" stroke="#444" stroke-width="0.95"/><rect x="163.1" y="119.7" width="11.9" height="3.0" fill="#d81a1a"/></svg>
<svg style="left:150.20px;top:114.65px" width="5.60" height="3.90" viewBox="0 0 5.60 3.90"><polyline points="1,1 2.8,2.9 4.6,1" fill="none" stroke="#3a5a8a" stroke-width="0.9" stroke-linecap="round" stroke-linejoin="round"/></svg>
<svg style="left:179.10px;top:114.60px" width="5.80" height="4.00" viewBox="0 0 5.80 4.00"><polyline points="1,1 2.9,3 4.8,1" fill="none" stroke="#444" stroke-width="0.9" stroke-linecap="round" stroke-linejoin="round"/></svg>
<svg style="left:0;top:0" width="720" height="480" viewBox="0 0 720 480"><path d="M217.6,75.4 H227.4" stroke="#5a5a5a" stroke-width="0.95"/><path d="M219.7,78.3 H225.3" stroke="#5a5a5a" stroke-width="0.95"/><path d="M217.6,81.2 H227.4" stroke="#5a5a5a" stroke-width="0.95"/><path d="M235.8,77.3 H245.6" stroke="#5a5a5a" stroke-width="0.95"/><path d="M237.9,80.2 H243.5" stroke="#5a5a5a" stroke-width="0.95"/><path d="M235.8,83.1 H245.6" stroke="#5a5a5a" stroke-width="0.95"/></svg>
<div class="a" style="left:250.3px;top:72.3px;width:16.40px;height:16.20px;background:#e6e6e6;border:1px solid #bdbdbd;border-radius:3px"></div>
<svg style="left:0;top:0" width="720" height="480" viewBox="0 0 720 480"><path d="M253.6,80.6 H263.4" stroke="#5a5a5a" stroke-width="0.95"/><path d="M255.7,83.4 H261.3" stroke="#5a5a5a" stroke-width="0.95"/><path d="M253.6,86.2 H263.4" stroke="#5a5a5a" stroke-width="0.95"/><path d="M217.6,94.0 H227.6" stroke="#5a5a5a" stroke-width="0.95"/><path d="M217.6,96.8 H224.0" stroke="#5a5a5a" stroke-width="0.95"/><path d="M217.6,99.6 H227.6" stroke="#5a5a5a" stroke-width="0.95"/><path d="M217.6,102.4 H224.0" stroke="#5a5a5a" stroke-width="0.95"/><path d="M235.7,94.0 H245.7" stroke="#5a5a5a" stroke-width="0.95"/><path d="M237.5,96.8 H243.9" stroke="#5a5a5a" stroke-width="0.95"/><path d="M235.7,99.6 H245.7" stroke="#5a5a5a" stroke-width="0.95"/><path d="M237.5,102.4 H243.9" stroke="#5a5a5a" stroke-width="0.95"/><path d="M253.8,94.0 H263.8" stroke="#5a5a5a" stroke-width="0.95"/><path d="M257.40000000000003,96.8 H263.8" stroke="#5a5a5a" stroke-width="0.95"/><path d="M253.8,99.6 H263.8" stroke="#5a5a5a" stroke-width="0.95"/><path d="M257.40000000000003,102.4 H263.8" stroke="#5a5a5a" stroke-width="0.95"/><path d="M217.4,112.0 H227.4" stroke="#5a5a5a" stroke-width="0.95"/><path d="M223.0,114.95 H227.4" stroke="#5a5a5a" stroke-width="0.95"/><path d="M223.0,117.9 H227.4" stroke="#5a5a5a" stroke-width="0.95"/><path d="M217.4,120.8 H227.4" stroke="#5a5a5a" stroke-width="0.95"/><path d="M221.8,116.4 H217.8 M219.3,114.9 L217.8,116.4 L219.3,117.9" fill="none" stroke="#3a86c8" stroke-width="0.85"/><path d="M235.5,112.0 H245.5" stroke="#5a5a5a" stroke-width="0.95"/><path d="M241.1,114.95 H245.5" stroke="#5a5a5a" stroke-width="0.95"/><path d="M241.1,117.9 H245.5" stroke="#5a5a5a" stroke-width="0.95"/><path d="M235.5,120.8 H245.5" stroke="#5a5a5a" stroke-width="0.95"/><path d="M235.9,116.4 H239.9 M238.4,114.9 L239.9,116.4 L238.4,117.9" fill="none" stroke="#3a86c8" stroke-width="0.85"/><text x="272.8" y="81.0" font-size="6.6" font-family="Liberation Sans" fill="#555" letter-spacing="-0.2">ab</text><text x="272.6" y="86.6" font-size="6.6" font-family="Liberation Sans" fill="#3a86c8">c</text><path d="M281.8,81.6 V83.4 C281.8,84.8 280.9,85.3 279.6,85.3 H277.0 M278.5,83.8 L277.0,85.3 L278.5,86.8" fill="none" stroke="#3a86c8" stroke-width="0.9"/><rect x="271.3" y="93.2" width="10.4" height="10.4" fill="#d5e8f8" stroke="#4a4a4a" stroke-width="0.85"/><rect x="271.3" y="95.8" width="10.4" height="5.2" fill="#7db6e6" stroke="#4a4a4a" stroke-width="0.6"/><path d="M273.2,98.4 H279.8 M274.5,97.1 L273.2,98.4 L274.5,99.7 M278.5,97.1 L279.8,98.4 L278.5,99.7" fill="none" stroke="#fff" stroke-width="0.8"/><text x="255.6" y="118.6" font-size="6.6" font-family="Liberation Sans" fill="#555" transform="rotate(-45 258.5 115.5)">ab</text><path d="M258.2,121.6 L265.8,114.0 M262.9,113.8 H266.0 V116.9" fill="none" stroke="#3a86c8" stroke-width="0.9"/></svg>
<svg style="left:286.90px;top:96.90px" width="5.80" height="4.00" viewBox="0 0 5.80 4.00"><polyline points="1,1 2.9,3 4.8,1" fill="none" stroke="#444" stroke-width="0.9" stroke-linecap="round" stroke-linejoin="round"/></svg>
<div class="a" style="left:250.2px;top:108px;width:0.70px;height:16.60px;background:#e2e2e2"></div>
<svg style="left:269.40px;top:114.95px" width="5.60" height="3.90" viewBox="0 0 5.60 3.90"><polyline points="1,1 2.8,2.9 4.6,1" fill="none" stroke="#444" stroke-width="0.9" stroke-linecap="round" stroke-linejoin="round"/></svg>
<div class="a" style="left:308.3px;top:72.7px;width:63.30px;height:15.60px;background:#fff;border:1px solid #c8c8c8;border-radius:3px"></div>
<div class="t" id="t26" style="left:309.02px;top:77.62px;font-size:8.4px;color:#303030;font-weight:400;letter-spacing:-0.053px;">General</div>
<svg style="left:364.30px;top:78.90px" width="5.80" height="4.00" viewBox="0 0 5.80 4.00"><polyline points="1,1 2.9,3 4.8,1" fill="none" stroke="#333" stroke-width="0.9" stroke-linecap="round" stroke-linejoin="round"/></svg>
<svg style="left:326.80px;top:97.00px" width="5.40" height="3.80" viewBox="0 0 5.40 3.80"><polyline points="1,1 2.7,2.8 4.4,1" fill="none" stroke="#444" stroke-width="0.9" stroke-linecap="round" stroke-linejoin="round"/></svg>
<svg style="left:0;top:0" width="720" height="480" viewBox="0 0 720 480"><path d="M318.1,96.6 C317.6,94.9 313.9,94.7 313.7,96.8 C313.5,98.7 318.4,98.6 318.3,101.1 C318.2,103.3 314.0,103.2 313.4,101.6" fill="none" stroke="#3a3a3a" stroke-width="1.0" stroke-linecap="round"/><path d="M315.9,93.6 V104.2" stroke="#3a3a3a" stroke-width="0.9"/><circle cx="342.3" cy="96.5" r="1.75" fill="none" stroke="#3a3a3a" stroke-width="0.95"/><circle cx="348.2" cy="101.4" r="1.75" fill="none" stroke="#3a3a3a" stroke-width="0.95"/><path d="M349.4,94.4 L341.0,103.5" stroke="#3a3a3a" stroke-width="0.95"/><circle cx="363.4" cy="97.0" r="2.3" fill="#333"/><path d="M365.3,97.4 C365.5,100.2 364.2,102.3 361.2,103.2" fill="none" stroke="#333" stroke-width="1.5"/><path d="M315.3,112.9 H310.9 M312.6,111.2 L310.9,112.9 L312.6,114.6" fill="none" stroke="#3a86c8" stroke-width="0.9"/><text x="316.4" y="115.9" font-size="6.8" font-family="Liberation Sans" fill="#444">0</text><text x="312.4" y="122.2" font-size="6.8" font-family="Liberation Sans" fill="#444" letter-spacing="-0.3">.00</text><text x="330.6" y="115.9" font-size="6.8" font-family="Liberation Sans" fill="#444" letter-spacing="-0.3">.00</text><path d="M328.9,119.5 H333.3 M331.6,117.8 L333.3,119.5 L331.6,121.2" fill="none" stroke="#3a86c8" stroke-width="0.9"/><text x="334.4" y="122.2" font-size="6.8" font-family="Liberation Sans" fill="#444">0</text></svg>
<svg style="left:385.00px;top:75.20px" width="12.50" height="11.20" viewBox="0 0 12.50 11.20"><rect x="0.8" y="0.7" width="10.8" height="9.6" fill="#fbe9ea"/><rect x="3.5" y="0.7" width="5.4" height="3.2" fill="#e0506a"/><rect x="3.5" y="7.1" width="5.4" height="3.2" fill="#ee6a6a"/><rect x="3.5" y="3.9" width="2.7" height="3.2" fill="#7c8fc4"/><rect x="0.8" y="0.7" width="10.8" height="9.6" fill="none" stroke="#555" stroke-width="0.85"/><path d="M3.5,0.7 V10.3 M6.2,0.7 V10.3 M8.9,0.7 V10.3 M0.8,3.9 H11.6 M0.8,7.1 H11.6" stroke="#6a4a4a" stroke-width="0.55"/></svg>
<svg style="left:385.00px;top:93.40px" width="12.50" height="11.20" viewBox="0 0 12.50 11.20"><rect x="0.8" y="0.7" width="10.8" height="9.6" fill="#ffffff"/><rect x="3.5" y="3.9" width="5.4" height="6.4" fill="#6aa8dc"/><rect x="0.8" y="7.1" width="10.8" height="3.2" fill="#6aa8dc"/><rect x="0.8" y="0.7" width="10.8" height="9.6" fill="none" stroke="#555" stroke-width="0.85"/><path d="M3.5,0.7 V10.3 M8.9,0.7 V10.3 M0.8,3.9 H11.6 M0.8,7.1 H11.6" stroke="#6a6a6a" stroke-width="0.5"/><path d="M5.2,10.2 L11.4,3.8" stroke="#fff" stroke-width="1.6"/><path d="M5.6,10.4 L11.6,4.2" stroke="#2f6aa8" stroke-width="0.8"/></svg>
<svg style="left:385.00px;top:111.60px" width="12.50" height="11.20" viewBox="0 0 12.50 11.20"><rect x="0.8" y="0.7" width="10.8" height="9.6" fill="#ffffff"/><path d="M0.8,0.7 H11.6 L0.8,10.3 Z" fill="#7db6e6"/><rect x="0.8" y="0.7" width="6" height="9.6" fill="#6aa8dc"/><rect x="0.8" y="0.7" width="10.8" height="9.6" fill="none" stroke="#555" stroke-width="0.85"/><path d="M0.8,2.6 H11.6 M2.6,0.7 V10.3" stroke="#555" stroke-width="0.5"/><path d="M5.2,10.2 L11.4,3.8" stroke="#fff" stroke-width="1.6"/><path d="M5.6,10.4 L11.6,4.2" stroke="#2f6aa8" stroke-width="0.8"/></svg>
<div class="t" id="t27" style="left:399.60px;top:76.47px;font-size:9.4px;color:#303030;font-weight:400;letter-spacing:-0.331px;">Conditional Formatting</div>
<svg style="left:488.90px;top:78.60px" width="5.60" height="4.00" viewBox="0 0 5.60 4.00"><polyline points="1,1 2.8,3 4.6,1" fill="none" stroke="#444" stroke-width="0.85" stroke-linecap="round" stroke-linejoin="round"/></svg>
<div class="t" id="t28" style="left:398.80px;top:94.47px;font-size:9.4px;color:#303030;font-weight:400;letter-spacing:-0.486px;">Format as Table</div>
<svg style="left:460.60px;top:96.80px" width="5.60" height="4.00" viewBox="0 0 5.60 4.00"><polyline points="1,1 2.8,3 4.6,1" fill="none" stroke="#444" stroke-width="0.85" stroke-linecap="round" stroke-linejoin="round"/></svg>
<div class="t" id="t29" style="left:399.60px;top:112.87px;font-size:9.4px;color:#303030;font-weight:400;letter-spacing:-0.568px;">Cell Styles</div>
<svg style="left:439.50px;top:115.00px" width="5.60" height="4.00" viewBox="0 0 5.60 4.00"><polyline points="1,1 2.8,3 4.6,1" fill="none" stroke="#444" stroke-width="0.85" stroke-linecap="round" stroke-linejoin="round"/></svg>
<svg style="left:0;top:0" width="720" height="480" viewBox="0 0 720 480"><path d="M520.3,74.6 H531.3" stroke="#555" stroke-width="0.9"/><path d="M520.3,73.4 V75.8 M531.3,73.4 V75.8" stroke="#555" stroke-width="0.8"/><rect x="521.5" y="77.2" width="9.1" height="15" fill="#e8f3fc"/><rect x="521.5" y="82.4" width="9.1" height="5.2" fill="#6aaee8"/><rect x="516.2" y="77.2" width="19.5" height="15" fill="none" stroke="#555" stroke-width="0.95"/><path d="M521.5,77.2 V92.2 M530.6,77.2 V92.2 M516.2,82.4 H535.7 M516.2,87.6 H535.7" stroke="#555" stroke-width="0.8"/></svg>
<div class="t" id="t30" style="left:516.56px;top:99.50px;font-size:8.9px;color:#333;font-weight:400;letter-spacing:-0.440px;">Cells</div>
<svg style="left:522.40px;top:112.00px" width="5.80" height="4.00" viewBox="0 0 5.80 4.00"><polyline points="1,1 2.9,3 4.8,1" fill="none" stroke="#444" stroke-width="0.9" stroke-linecap="round" stroke-linejoin="round"/></svg>
<svg style="left:553.00px;top:74.00px" width="23.00" height="22.00" viewBox="0 0 23.00 22.00"><circle cx="14.2" cy="8.1" r="7.3" fill="none" stroke="#555" stroke-width="0.95"/><path d="M9,13.2 L0.9,21.2" stroke="#555" stroke-width="0.95" stroke-linecap="round"/></svg>
<div class="t" id="t31" style="left:551.04px;top:99.50px;font-size:8.9px;color:#333;font-weight:400;letter-spacing:-0.053px;">Editing</div>
<svg style="left:561.50px;top:112.00px" width="5.80" height="4.00" viewBox="0 0 5.80 4.00"><polyline points="1,1 2.9,3 4.8,1" fill="none" stroke="#444" stroke-width="0.9" stroke-linecap="round" stroke-linejoin="round"/></svg>
<svg style="left:595.50px;top:75.00px" width="21.00" height="21.00" viewBox="0 0 21.00 21.00"><rect x="0.7" y="0.7" width="19.2" height="19.2" fill="#fbe3d6" stroke="#e0703a" stroke-width="0.9"/><rect x="3" y="3" width="6.3" height="6.3" rx="0.8" fill="#fff" stroke="#e0703a" stroke-width="0.9"/><rect x="11.3" y="3" width="6.3" height="6.3" rx="0.8" fill="#fff" stroke="#e0703a" stroke-width="0.9"/><rect x="3" y="11.3" width="6.3" height="6.3" rx="0.8" fill="#fff" stroke="#e0703a" stroke-width="0.9"/><rect x="11.3" y="11.3" width="6.3" height="6.3" rx="0.8" fill="#fff" stroke="#e0703a" stroke-width="0.9"/></svg>
<div class="t" id="t32" style="left:591.28px;top:100.58px;font-size:8.9px;color:#333;font-weight:400;letter-spacing:-0.107px;">Add-ins</div>
<svg style="left:0;top:0" width="720" height="480" viewBox="0 0 720 480"><rect x="639.6" y="76.1" width="19.3" height="19.1" fill="#fff" stroke="#5a5a5a" stroke-width="0.95"/><path d="M639.6,78.0 H658.9" stroke="#9a9a9a" stroke-width="0.8"/><path d="M639.6,84.6 H658.9 M639.6,90.2 H658.9 M645.6,78 V95.2 M652.8,78 V95.2" stroke="#c8c8c8" stroke-width="0.7"/><circle cx="648.4" cy="83.4" r="5.8" fill="#eef6fc" stroke="#555" stroke-width="0.95"/><path d="M652.6,87.6 L658.4,94.4" stroke="#555" stroke-width="1.1"/><rect x="645.7" y="83.6" width="1.3" height="2.8" fill="#666"/><rect x="647.5" y="80.6" width="1.3" height="5.8" fill="#666"/><rect x="649.3" y="81.8" width="1.8" height="4.6" fill="#3a86c8"/></svg>
<div class="t" id="t33" style="left:634.60px;top:100.58px;font-size:8.9px;color:#333;font-weight:400;letter-spacing:-0.373px;">Analyze</div>
<div class="t" id="t34" style="left:640.10px;top:110.96px;font-size:8.9px;color:#333;font-weight:400;letter-spacing:-0.267px;">Data</div>
<svg style="left:682.00px;top:129.50px" width="8.50" height="5.50" viewBox="0 0 8.50 5.50"><polyline points="1,4.3 4.1,1.2 7.2,4.3" fill="none" stroke="#444" stroke-width="0.9" stroke-linecap="round"/></svg>
<div class="a" style="left:23.1px;top:146.4px;width:70.80px;height:15.50px;background:#fff;border-radius:4px;box-shadow:0 0 0 0.6px #dadada"></div>
<div class="t" id="t35" style="left:25.80px;top:151.33px;font-size:9.6px;color:#333;font-weight:400;letter-spacing:0.800px;transform:scaleX(0.86);transform-origin:0 0;">E2</div>
<svg style="left:82.50px;top:152.40px" width="8.20" height="5.20" viewBox="0 0 8.20 5.20"><polyline points="1,1 4.1,4.2 7.2,1" fill="none" stroke="#444" stroke-width="0.9" stroke-linecap="round" stroke-linejoin="round"/></svg>
<svg style="left:99.80px;top:150.50px" width="3.20" height="7.50" viewBox="0 0 3.20 7.50"><circle cx="1.6" cy="1.1" r="0.75" fill="#444"/><circle cx="1.6" cy="3.7" r="0.75" fill="#444"/><circle cx="1.6" cy="6.3" r="0.75" fill="#444"/></svg>
<div class="a" style="left:109px;top:145.8px;width:58.50px;height:15.90px;background:#fff;border-radius:4px;box-shadow:0 0 0 0.6px #dadada"></div>
<svg style="left:0;top:0" width="720" height="480" viewBox="0 0 720 480"><path d="M113.6,150.3 L121.2,157.8 M121.2,150.3 L113.6,157.8" stroke="#c4c4c4" stroke-width="0.9"/></svg>
<svg style="left:0;top:0" width="720" height="480" viewBox="0 0 720 480"><polyline points="129.5,154.4 133.2,158.0 140.3,150.2" fill="none" stroke="#c4c4c4" stroke-width="0.9"/></svg>
<div class="t" style="left:147.6px;top:149.2px;font-size:11.8px;font-family:'Liberation Serif',serif;font-style:italic;font-weight:bold;color:#444;letter-spacing:-0.5px">fx</div>
<svg style="left:160.50px;top:152.35px" width="7.00" height="4.50" viewBox="0 0 7.00 4.50"><polyline points="1,1 3.5,3.5 6.0,1" fill="none" stroke="#8a8a8a" stroke-width="0.85" stroke-linecap="round" stroke-linejoin="round"/></svg>
<div class="a" style="left:169.4px;top:142.4px;width:534.10px;height:23.20px;background:#fff;border:2px solid #e0716b;border-bottom-width:2.3px;border-radius:1.5px;box-shadow:inset 0 0 0 1.1px #f6cfcb,0 0 0 0.9px rgba(232,140,132,.45)"></div>
<div class="t" id="t36" style="left:179.10px;top:150.51px;font-size:9.9px;color:#2e2e2e;font-weight:400;letter-spacing:-0.000px;transform:scaleX(0.92);transform-origin:0 0;">Text</div>
<svg style="left:688.30px;top:151.80px" width="8.00" height="5.00" viewBox="0 0 8.00 5.00"><polyline points="1,1 4.0,4 7,1" fill="none" stroke="#444" stroke-width="0.9" stroke-linecap="round" stroke-linejoin="round"/></svg>
<svg style="left:694.00px;top:170.50px" width="7.00" height="4.50" viewBox="0 0 7.00 4.50"><polygon points="0.2,4.2 3.5,0.2 6.8,4.2" fill="#6a6a6a"/></svg>
<div class="a" style="left:694.2px;top:179.2px;width:5.90px;height:202.10px;background:#6e6e6e;border-radius:3px"></div>
<svg style="left:694.00px;top:419.70px" width="7.00" height="4.80" viewBox="0 0 7.00 4.80"><polygon points="0.2,0.2 3.5,4.5 6.8,0.2" fill="#6a6a6a"/></svg>
<svg style="left:33.50px;top:433.00px" width="7.00" height="8.50" viewBox="0 0 7.00 8.50"><polyline points="5.2,0.8 1.5,4.2 5.2,7.6" fill="none" stroke="#999" stroke-width="0.9"/></svg>
<svg style="left:56.50px;top:433.00px" width="7.00" height="8.50" viewBox="0 0 7.00 8.50"><polyline points="1.5,0.8 5.2,4.2 1.5,7.6" fill="none" stroke="#999" stroke-width="0.9"/></svg>
<div class="a" style="left:97px;top:426.2px;width:40.50px;height:20.10px;background:#fff;border-radius:3px;box-shadow:0 0.5px 1px rgba(0,0,0,.15)"></div>
<div class="t" id="t37" style="left:102.68px;top:430.72px;font-size:10.6px;color:#2a2a2a;font-weight:400;letter-spacing:0.064px;-webkit-text-stroke:0.3px #2a2a2a;transform:scaleX(0.87);transform-origin:0 0;">Sheet1</div>
<div class="a" style="left:101.9px;top:443.0px;width:29.90px;height:1.60px;background:#5a8c6f;border-radius:1px"></div>
<div class="a" style="left:139.7px;top:428px;width:0.80px;height:18.00px;background:#d0d0d0"></div>
<svg style="left:169.50px;top:432.50px" width="9.00" height="9.00" viewBox="0 0 9.00 9.00"><path d="M4.5,0.5 V8.5 M0.5,4.5 H8.5" stroke="#444" stroke-width="0.95"/></svg>
<svg style="left:431.00px;top:433.00px" width="2.50" height="10.00" viewBox="0 0 2.50 10.00"><circle cx="1.2" cy="1.2" r="0.8" fill="#444"/><circle cx="1.2" cy="4.7" r="0.8" fill="#444"/><circle cx="1.2" cy="8.2" r="0.8" fill="#444"/></svg>
<svg style="left:446.50px;top:434.00px" width="5.50" height="7.00" viewBox="0 0 5.50 7.00"><polygon points="5,0.4 0.2,3.4 5,6.4" fill="#6a6a6a"/></svg>
<div class="a" style="left:455.1px;top:434.3px;width:215.20px;height:6.00px;background:#6e6e6e;border-radius:3px"></div>
<svg style="left:682.70px;top:434.00px" width="5.30" height="7.00" viewBox="0 0 5.30 7.00"><polygon points="0.2,0.4 5,3.4 0.2,6.4" fill="#6a6a6a"/></svg>
<div class="a" style="left:17px;top:448.4px;width:687.00px;height:15.60px;background:#f4f4f4;border-top:0.8px solid #fbfbfb"></div>
<div class="t" id="t38" style="left:25.30px;top:454.15px;font-size:7.9px;color:#444;font-weight:400;letter-spacing:-0.600px;">Ready</div>
<svg style="left:58.50px;top:452.00px" width="11.50" height="10.00" viewBox="0 0 11.50 10.00"><rect x="0.6" y="0.6" width="9.6" height="8.6" fill="none" stroke="#444" stroke-width="0.85"/><path d="M0.6,2.4 H10.2" stroke="#444" stroke-width="0.85"/><circle cx="7" cy="6.4" r="2.6" fill="#fff" stroke="#444" stroke-width="0.85"/><circle cx="7" cy="6.4" r="0.9" fill="#444"/></svg>
<svg style="left:408.50px;top:451.80px" width="11.00" height="10.20" viewBox="0 0 11.00 10.20"><path d="M7,6.5 H0.6 V0.6 H10 V3.8" fill="none" stroke="#444" stroke-width="0.85"/><path d="M3,8.6 H5" stroke="#444" stroke-width="0.85"/><circle cx="7.8" cy="7.2" r="1.6" fill="none" stroke="#444" stroke-width="0.85"/></svg>
<div class="t" id="t39" style="left:419.64px;top:453.08px;font-size:8.6px;color:#383838;font-weight:400;letter-spacing:-0.128px;transform:scaleX(0.88);transform-origin:0 0;">Display Settings</div>
<div class="a" style="left:486.2px;top:449px;width:28.20px;height:15.00px;background:#e0e0e0"></div>
<svg style="left:494.80px;top:451.80px" width="10.70" height="10.20" viewBox="0 0 10.70 10.20"><rect x="0.6" y="0.6" width="9.4" height="8.6" fill="none" stroke="#444" stroke-width="0.8"/><path d="M3.7,0.6 V9.2 M6.9,0.6 V9.2 M0.6,3.5 H10 M0.6,6.3 H10" stroke="#444" stroke-width="0.7"/></svg>
<svg style="left:523.00px;top:451.80px" width="11.00" height="10.20" viewBox="0 0 11.00 10.20"><rect x="0.6" y="0.6" width="9.6" height="8.6" fill="none" stroke="#444" stroke-width="0.8"/><rect x="2.6" y="2.2" width="5.6" height="5.4" fill="none" stroke="#444" stroke-width="0.7"/></svg>
<svg style="left:551.50px;top:451.50px" width="11.00" height="10.00" viewBox="0 0 11.00 10.00"><path d="M0.6,0.6 V8.6 H10 V0.6 M4.5,0.6 V4.5 H0.6 M0.6,0.6 H10" fill="none" stroke="#444" stroke-width="0.8"/></svg>
<div class="a" style="left:575.4px;top:456.2px;width:4.30px;height:0.80px;background:#444"></div>
<div class="a" style="left:583.7px;top:456.3px;width:70.80px;height:0.70px;background:#b0b0b0"></div>
<div class="a" style="left:617.9px;top:453px;width:3.60px;height:7.60px;background:#555;border-radius:1px"></div>
<svg style="left:657.50px;top:452.50px" width="6.00" height="8.00" viewBox="0 0 6.00 8.00"><path d="M3,0.8 V7.2 M0.2,4 H5.8" stroke="#444" stroke-width="0.85"/></svg>
<div class="t" id="t40" style="left:672.68px;top:453.96px;font-size:7.2px;color:#444;font-weight:400;letter-spacing:-0.427px;">100%</div>
<div class="t" id="t41" style="left:218.70px;top:196.62px;font-size:10.6px;color:#2a2a2a;font-weight:400;letter-spacing:0.000px;transform:scaleX(0.80);transform-origin:0 0;-webkit-text-stroke:0.1px #2a2a2a;">Text</div>
</body></html>
